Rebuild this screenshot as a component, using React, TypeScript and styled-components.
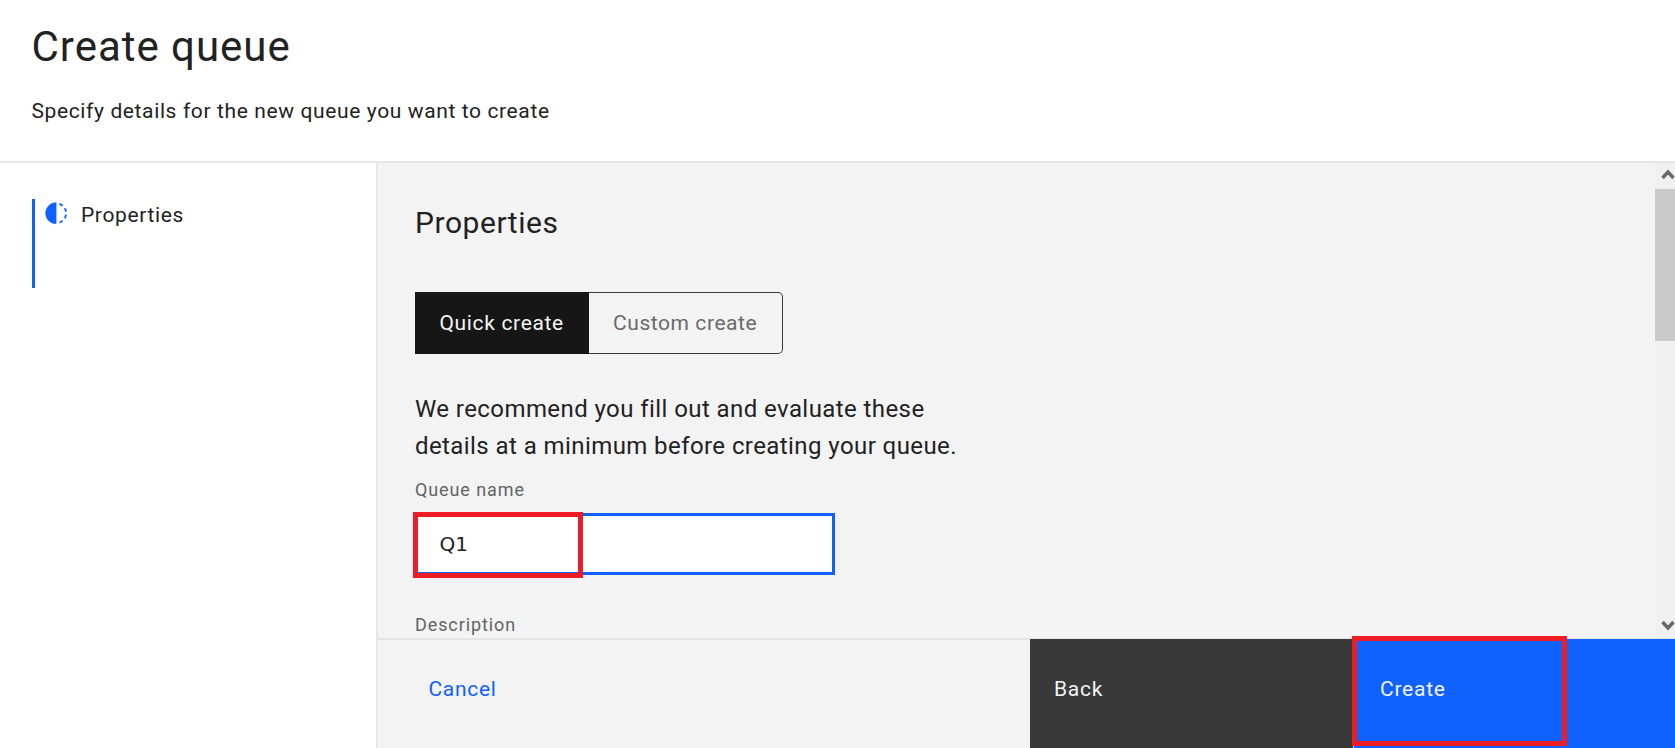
import React from 'react';
import styled, { createGlobalStyle } from 'styled-components';

const GlobalStyle = createGlobalStyle`
  * { box-sizing: border-box; }
  body { margin: 0; background: #fff; color: #222; font-family: Roboto, sans-serif; overflow: hidden; }
  h1, h2, p { margin: 0; font-weight: 400; }
  button, input { font-family: inherit; margin: 0; }
`;

const Page = styled.div`
  display: flex;
  flex-direction: column;
  width: 1675px;
  height: 748px;
  overflow: hidden;
`;

const Header = styled.header`
  flex: none;
  height: 163px;
  padding: 17px 0 0 31.5px;
  border-bottom: 2px solid #e5e5e5;
`;

const Title = styled.h1`
  font-size: 42px;
  line-height: 60px;
  letter-spacing: 0.98px;
`;

const Subtitle = styled.p`
  margin-top: 20px;
  font-size: 21px;
  line-height: 28px;
  letter-spacing: 0.62px;
`;

const Body = styled.div`
  display: flex;
  flex: 1;
  min-height: 0;
`;

const Sidebar = styled.nav`
  flex: none;
  width: 378px;
  padding: 36px 0 0 32px;
  border-right: 2px solid #e6e6e6;
`;

const Step = styled.div`
  display: flex;
  align-items: flex-start;
  height: 89px;
  padding-left: 9px;
  border-left: 3px solid #0f62fe;
`;

const StepIcon = styled.svg`
  width: 24.4px;
  height: 24.4px;
  margin-top: 1.5px;
  fill: #0f62fe;
  stroke: #0f62fe;
  stroke-width: 0.5;
`;

const StepLabel = styled.span`
  margin-left: 12.6px;
  font-size: 21px;
  line-height: 32px;
  letter-spacing: 0.64px;
`;

const Main = styled.main`
  display: flex;
  flex-direction: column;
  flex: 1;
  min-width: 0;
  background: #f3f3f3;
`;

const ScrollArea = styled.div`
  display: flex;
  height: 475px;
  overflow: hidden;
`;

const Content = styled.section`
  flex: 1;
  padding: 40px 0 0 37px;
`;

const Heading = styled.h2`
  font-size: 30px;
  line-height: 40px;
  letter-spacing: 0.55px;
`;

const Switcher = styled.div`
  display: flex;
  width: 368px;
  height: 62px;
  margin-top: 49px;
`;

const SwitchTab = styled.button<{ $active?: boolean }>`
  flex: ${p => (p.$active ? '0 0 174px' : '1')};
  padding: 0 0 0 ${p => (p.$active ? 23.5 : 24)}px;
  border: 1px solid ${p => (p.$active ? '#161616' : '#3a3a3a')};
  border-left-width: ${p => (p.$active ? 1 : 0)}px;
  border-radius: ${p => (p.$active ? '0' : '0 5px 5px 0')};
  background: ${p => (p.$active ? '#161616' : 'transparent')};
  color: ${p => (p.$active ? '#f4f4f4' : '#6a6a6a')};
  font-size: 21px;
  letter-spacing: ${p => (p.$active ? 0.66 : 0.57)}px;
  text-align: left;
`;

const Hint = styled.p`
  margin-top: 37px;
  width: 570px;
  font-size: 24px;
  line-height: 37px;
  letter-spacing: 0.42px;
`;

const FieldLabel = styled.label<{ $gap: number }>`
  display: block;
  margin-top: ${p => p.$gap}px;
  font-size: 18px;
  line-height: 24px;
  letter-spacing: 0.9px;
  color: #646464;
`;

const Field = styled.div`
  position: relative;
  width: 420px;
  height: 62px;
  margin-top: 11px;
`;

const TextInput = styled.input`
  width: 100%;
  height: 100%;
  padding: 0 0 1px 21.5px;
  border: 3px solid #0f62fe;
  border-radius: 0;
  outline: none;
  background: #fff;
  color: #222;
  font-family: "DejaVu Sans", sans-serif;
  font-size: 20px;
`;

const Marker = styled.div<{ $x: number; $y: number; $w: number; $h: number }>`
  position: absolute;
  left: ${p => p.$x}px;
  top: ${p => p.$y}px;
  width: ${p => p.$w}px;
  height: ${p => p.$h}px;
  border: 5px solid #ee1c25;
  pointer-events: none;
`;

const Scrollbar = styled.div`
  display: flex;
  flex-direction: column;
  flex: none;
  align-items: center;
  width: 20px;
  padding: 6px 0 7px;
  background: #f0f0f0;
`;

const Arrow = styled.svg`
  flex: none;
  width: 14px;
  height: 11px;
  margin-left: 5px;
  fill: none;
  stroke: #686868;
  stroke-width: 3.4;
`;

const Thumb = styled.div`
  width: 20px;
  height: 152px;
  margin: 9px 0 auto;
  background: #cacaca;
`;

const Footer = styled.footer`
  display: flex;
  flex: 1;
  border-top: 2px solid #e4e4e4;
`;

const CancelButton = styled.button`
  flex: 1;
  padding: 35px 0 0 50.5px;
  border: 0;
  background: transparent;
  color: #0f62fe;
  font-size: 21px;
  line-height: 28px;
  letter-spacing: 0.7px;
  text-align: left;
  align-self: flex-start;
`;

const ActionButton = styled.button<{ $primary?: boolean }>`
  display: flex;
  flex: none;
  align-items: flex-start;
  width: ${p => (p.$primary ? 321 : 324)}px;
  margin-top: -1px;
  padding: 36px 0 0 ${p => (p.$primary ? 26 : 24)}px;
  border: 0;
  border-right: ${p => (p.$primary ? '0' : '1px solid #e0e0e0')};
  background: ${p => (p.$primary ? '#0f62fe' : '#393939')};
  color: #f4f4f4;
  font-size: 21px;
  line-height: 28px;
  letter-spacing: 0.76px;
`;

const CreateSlot = styled.div`
  position: relative;
  display: flex;
`;

export default function App() {
  return (
    <Page>
      <GlobalStyle />
      <Header>
        <Title>Create queue</Title>
        <Subtitle>Specify details for the new queue you want to create</Subtitle>
      </Header>
      <Body>
        <Sidebar>
          <Step>
            <StepIcon viewBox="0 0 32 32">
              <path d="M23.764 6.859l1.285-1.531A13.976 13.976 0 0020.867 2.887l-.683 1.878A11.973 11.973 0 0123.764 6.859zM27.81 14l1.968-.413A13.889 13.889 0 0028.14 9.046L26.409 10A12.52 12.52 0 0127.81 14zM20.184 27.235l.683 1.878a13.976 13.976 0 004.182-2.441l-1.285-1.531A11.973 11.973 0 0120.184 27.235zM26.409 22L28.14 23a14.14 14.14 0 001.638-4.587L27.81 18.066A12.152 12.152 0 0126.409 22zM16 30V2a14 14 0 000 28z" />
            </StepIcon>
            <StepLabel>Properties</StepLabel>
          </Step>
        </Sidebar>
        <Main>
          <ScrollArea>
            <Content>
              <Heading>Properties</Heading>
              <Switcher>
                <SwitchTab $active>Quick create</SwitchTab>
                <SwitchTab>Custom create</SwitchTab>
              </Switcher>
              <Hint>
                We recommend you fill out and evaluate these
                <br />
                details at a minimum before creating your queue.
              </Hint>
              <FieldLabel $gap={13} htmlFor="queue-name">Queue name</FieldLabel>
              <Field>
                <TextInput id="queue-name" defaultValue="Q1" />
                <Marker $x={-2} $y={-1} $w={170} $h={66} />
              </Field>
              <FieldLabel $gap={38}>Description</FieldLabel>
            </Content>
            <Scrollbar>
              <Arrow viewBox="0 0 14 11"><path d="M1.5 9L7 3l5.5 6" /></Arrow>
              <Thumb />
              <Arrow viewBox="0 0 14 11"><path d="M1.5 2L7 8l5.5-6" /></Arrow>
            </Scrollbar>
          </ScrollArea>
          <Footer>
            <CancelButton>Cancel</CancelButton>
            <ActionButton>Back</ActionButton>
            <CreateSlot>
              <ActionButton $primary>Create</ActionButton>
              <Marker $x={-2} $y={-4} $w={215} $h={110} />
            </CreateSlot>
          </Footer>
        </Main>
      </Body>
    </Page>
  );
}
